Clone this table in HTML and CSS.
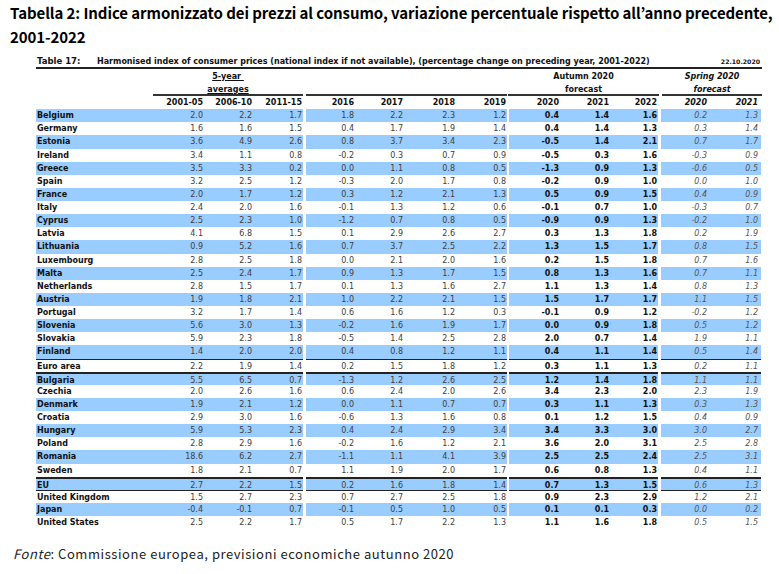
FILE: index.html
```html
<!DOCTYPE html>
<html lang="it">
<head>
<meta charset="utf-8">
<title>Tabella 2</title>
<link rel="stylesheet" href="styles.css">
</head>
<body>
<h1 class="title">Tabella 2: Indice armonizzato dei prezzi al consumo, variazione percentuale rispetto all’anno precedente, 2001-2022</h1>
<div class="tbl">
  <div class="tt"><span class="tt-no">Table 17:</span><span class="tt-name">Harmonised index of consumer prices (national index if not available), (percentage change on preceding year, 2001-2022)</span><span class="tt-date">22.10.2020</span></div>
  <div class="hb">
    <div class="hb-lab"></div>
    <div class="hg hg1"><span class="u">5-year&nbsp;</span><span class="u">averages</span></div>
    <div class="hg hg2"></div>
    <div class="hg hg3"><span>Autumn 2020</span><span>forecast</span></div>
    <div class="hg hg4 it"><span>Spring 2020</span><span>forecast</span></div>
  </div>
  <div class="row hc">
    <div class="g g1"><span class="lab"></span><span>2001-05</span><span>2006-10</span><span>2011-15</span></div>
    <div class="g g2"><span>2016</span><span>2017</span><span>2018</span><span>2019</span></div>
    <div class="g g3"><span>2020</span><span>2021</span><span>2022</span></div>
    <div class="g g4"><span>2020</span><span>2021</span></div>
  </div>
  <div class="row b"><div class="g g1"><span class="lab">Belgium</span><span>2.0</span><span>2.2</span><span>1.7</span></div><div class="g g2"><span>1.8</span><span>2.2</span><span>2.3</span><span>1.2</span></div><div class="g g3"><span>0.4</span><span>1.4</span><span>1.6</span></div><div class="g g4"><span>0.2</span><span>1.3</span></div></div>
  <div class="row"><div class="g g1"><span class="lab">Germany</span><span>1.6</span><span>1.6</span><span>1.5</span></div><div class="g g2"><span>0.4</span><span>1.7</span><span>1.9</span><span>1.4</span></div><div class="g g3"><span>0.4</span><span>1.4</span><span>1.3</span></div><div class="g g4"><span>0.3</span><span>1.4</span></div></div>
  <div class="row b"><div class="g g1"><span class="lab">Estonia</span><span>3.6</span><span>4.9</span><span>2.6</span></div><div class="g g2"><span>0.8</span><span>3.7</span><span>3.4</span><span>2.3</span></div><div class="g g3"><span>-0.5</span><span>1.4</span><span>2.1</span></div><div class="g g4"><span>0.7</span><span>1.7</span></div></div>
  <div class="row"><div class="g g1"><span class="lab">Ireland</span><span>3.4</span><span>1.1</span><span>0.8</span></div><div class="g g2"><span>-0.2</span><span>0.3</span><span>0.7</span><span>0.9</span></div><div class="g g3"><span>-0.5</span><span>0.3</span><span>1.6</span></div><div class="g g4"><span>-0.3</span><span>0.9</span></div></div>
  <div class="row b"><div class="g g1"><span class="lab">Greece</span><span>3.5</span><span>3.3</span><span>0.2</span></div><div class="g g2"><span>0.0</span><span>1.1</span><span>0.8</span><span>0.5</span></div><div class="g g3"><span>-1.3</span><span>0.9</span><span>1.3</span></div><div class="g g4"><span>-0.6</span><span>0.5</span></div></div>
  <div class="row"><div class="g g1"><span class="lab">Spain</span><span>3.2</span><span>2.5</span><span>1.2</span></div><div class="g g2"><span>-0.3</span><span>2.0</span><span>1.7</span><span>0.8</span></div><div class="g g3"><span>-0.2</span><span>0.9</span><span>1.0</span></div><div class="g g4"><span>0.0</span><span>1.0</span></div></div>
  <div class="row b"><div class="g g1"><span class="lab">France</span><span>2.0</span><span>1.7</span><span>1.2</span></div><div class="g g2"><span>0.3</span><span>1.2</span><span>2.1</span><span>1.3</span></div><div class="g g3"><span>0.5</span><span>0.9</span><span>1.5</span></div><div class="g g4"><span>0.4</span><span>0.9</span></div></div>
  <div class="row"><div class="g g1"><span class="lab">Italy</span><span>2.4</span><span>2.0</span><span>1.6</span></div><div class="g g2"><span>-0.1</span><span>1.3</span><span>1.2</span><span>0.6</span></div><div class="g g3"><span>-0.1</span><span>0.7</span><span>1.0</span></div><div class="g g4"><span>-0.3</span><span>0.7</span></div></div>
  <div class="row b"><div class="g g1"><span class="lab">Cyprus</span><span>2.5</span><span>2.3</span><span>1.0</span></div><div class="g g2"><span>-1.2</span><span>0.7</span><span>0.8</span><span>0.5</span></div><div class="g g3"><span>-0.9</span><span>0.9</span><span>1.3</span></div><div class="g g4"><span>-0.2</span><span>1.0</span></div></div>
  <div class="row"><div class="g g1"><span class="lab">Latvia</span><span>4.1</span><span>6.8</span><span>1.5</span></div><div class="g g2"><span>0.1</span><span>2.9</span><span>2.6</span><span>2.7</span></div><div class="g g3"><span>0.3</span><span>1.3</span><span>1.8</span></div><div class="g g4"><span>0.2</span><span>1.9</span></div></div>
  <div class="row b"><div class="g g1"><span class="lab">Lithuania</span><span>0.9</span><span>5.2</span><span>1.6</span></div><div class="g g2"><span>0.7</span><span>3.7</span><span>2.5</span><span>2.2</span></div><div class="g g3"><span>1.3</span><span>1.5</span><span>1.7</span></div><div class="g g4"><span>0.8</span><span>1.5</span></div></div>
  <div class="row"><div class="g g1"><span class="lab">Luxembourg</span><span>2.8</span><span>2.5</span><span>1.8</span></div><div class="g g2"><span>0.0</span><span>2.1</span><span>2.0</span><span>1.6</span></div><div class="g g3"><span>0.2</span><span>1.5</span><span>1.8</span></div><div class="g g4"><span>0.7</span><span>1.6</span></div></div>
  <div class="row b"><div class="g g1"><span class="lab">Malta</span><span>2.5</span><span>2.4</span><span>1.7</span></div><div class="g g2"><span>0.9</span><span>1.3</span><span>1.7</span><span>1.5</span></div><div class="g g3"><span>0.8</span><span>1.3</span><span>1.6</span></div><div class="g g4"><span>0.7</span><span>1.1</span></div></div>
  <div class="row"><div class="g g1"><span class="lab">Netherlands</span><span>2.8</span><span>1.5</span><span>1.7</span></div><div class="g g2"><span>0.1</span><span>1.3</span><span>1.6</span><span>2.7</span></div><div class="g g3"><span>1.1</span><span>1.3</span><span>1.4</span></div><div class="g g4"><span>0.8</span><span>1.3</span></div></div>
  <div class="row b"><div class="g g1"><span class="lab">Austria</span><span>1.9</span><span>1.8</span><span>2.1</span></div><div class="g g2"><span>1.0</span><span>2.2</span><span>2.1</span><span>1.5</span></div><div class="g g3"><span>1.5</span><span>1.7</span><span>1.7</span></div><div class="g g4"><span>1.1</span><span>1.5</span></div></div>
  <div class="row"><div class="g g1"><span class="lab">Portugal</span><span>3.2</span><span>1.7</span><span>1.4</span></div><div class="g g2"><span>0.6</span><span>1.6</span><span>1.2</span><span>0.3</span></div><div class="g g3"><span>-0.1</span><span>0.9</span><span>1.2</span></div><div class="g g4"><span>-0.2</span><span>1.2</span></div></div>
  <div class="row b"><div class="g g1"><span class="lab">Slovenia</span><span>5.6</span><span>3.0</span><span>1.3</span></div><div class="g g2"><span>-0.2</span><span>1.6</span><span>1.9</span><span>1.7</span></div><div class="g g3"><span>0.0</span><span>0.9</span><span>1.8</span></div><div class="g g4"><span>0.5</span><span>1.2</span></div></div>
  <div class="row"><div class="g g1"><span class="lab">Slovakia</span><span>5.9</span><span>2.3</span><span>1.8</span></div><div class="g g2"><span>-0.5</span><span>1.4</span><span>2.5</span><span>2.8</span></div><div class="g g3"><span>2.0</span><span>0.7</span><span>1.4</span></div><div class="g g4"><span>1.9</span><span>1.1</span></div></div>
  <div class="row b"><div class="g g1"><span class="lab">Finland</span><span>1.4</span><span>2.0</span><span>2.0</span></div><div class="g g2"><span>0.4</span><span>0.8</span><span>1.2</span><span>1.1</span></div><div class="g g3"><span>0.4</span><span>1.1</span><span>1.4</span></div><div class="g g4"><span>0.5</span><span>1.4</span></div></div>
  <div class="row line"><div class="g g1"><span class="lab">Euro area</span><span>2.2</span><span>1.9</span><span>1.4</span></div><div class="g g2"><span>0.2</span><span>1.5</span><span>1.8</span><span>1.2</span></div><div class="g g3"><span>0.3</span><span>1.1</span><span>1.3</span></div><div class="g g4"><span>0.2</span><span>1.1</span></div></div>
  <div class="row b thick"><div class="g g1"><span class="lab">Bulgaria</span><span>5.5</span><span>6.5</span><span>0.7</span></div><div class="g g2"><span>-1.3</span><span>1.2</span><span>2.6</span><span>2.5</span></div><div class="g g3"><span>1.2</span><span>1.4</span><span>1.8</span></div><div class="g g4"><span>1.1</span><span>1.1</span></div></div>
  <div class="row"><div class="g g1"><span class="lab">Czechia</span><span>2.0</span><span>2.6</span><span>1.6</span></div><div class="g g2"><span>0.6</span><span>2.4</span><span>2.0</span><span>2.6</span></div><div class="g g3"><span>3.4</span><span>2.3</span><span>2.0</span></div><div class="g g4"><span>2.3</span><span>1.9</span></div></div>
  <div class="row b"><div class="g g1"><span class="lab">Denmark</span><span>1.9</span><span>2.1</span><span>1.2</span></div><div class="g g2"><span>0.0</span><span>1.1</span><span>0.7</span><span>0.7</span></div><div class="g g3"><span>0.3</span><span>1.1</span><span>1.3</span></div><div class="g g4"><span>0.3</span><span>1.3</span></div></div>
  <div class="row"><div class="g g1"><span class="lab">Croatia</span><span>2.9</span><span>3.0</span><span>1.6</span></div><div class="g g2"><span>-0.6</span><span>1.3</span><span>1.6</span><span>0.8</span></div><div class="g g3"><span>0.1</span><span>1.2</span><span>1.5</span></div><div class="g g4"><span>0.4</span><span>0.9</span></div></div>
  <div class="row b"><div class="g g1"><span class="lab">Hungary</span><span>5.9</span><span>5.3</span><span>2.3</span></div><div class="g g2"><span>0.4</span><span>2.4</span><span>2.9</span><span>3.4</span></div><div class="g g3"><span>3.4</span><span>3.3</span><span>3.0</span></div><div class="g g4"><span>3.0</span><span>2.7</span></div></div>
  <div class="row"><div class="g g1"><span class="lab">Poland</span><span>2.8</span><span>2.9</span><span>1.6</span></div><div class="g g2"><span>-0.2</span><span>1.6</span><span>1.2</span><span>2.1</span></div><div class="g g3"><span>3.6</span><span>2.0</span><span>3.1</span></div><div class="g g4"><span>2.5</span><span>2.8</span></div></div>
  <div class="row b"><div class="g g1"><span class="lab">Romania</span><span>18.6</span><span>6.2</span><span>2.7</span></div><div class="g g2"><span>-1.1</span><span>1.1</span><span>4.1</span><span>3.9</span></div><div class="g g3"><span>2.5</span><span>2.5</span><span>2.4</span></div><div class="g g4"><span>2.5</span><span>3.1</span></div></div>
  <div class="row"><div class="g g1"><span class="lab">Sweden</span><span>1.8</span><span>2.1</span><span>0.7</span></div><div class="g g2"><span>1.1</span><span>1.9</span><span>2.0</span><span>1.7</span></div><div class="g g3"><span>0.6</span><span>0.8</span><span>1.3</span></div><div class="g g4"><span>0.4</span><span>1.1</span></div></div>
  <div class="row b thick"><div class="g g1"><span class="lab">EU</span><span>2.7</span><span>2.2</span><span>1.5</span></div><div class="g g2"><span>0.2</span><span>1.6</span><span>1.8</span><span>1.4</span></div><div class="g g3"><span>0.7</span><span>1.3</span><span>1.5</span></div><div class="g g4"><span>0.6</span><span>1.3</span></div></div>
  <div class="row line"><div class="g g1"><span class="lab">United Kingdom</span><span>1.5</span><span>2.7</span><span>2.3</span></div><div class="g g2"><span>0.7</span><span>2.7</span><span>2.5</span><span>1.8</span></div><div class="g g3"><span>0.9</span><span>2.3</span><span>2.9</span></div><div class="g g4"><span>1.2</span><span>2.1</span></div></div>
  <div class="row b"><div class="g g1"><span class="lab">Japan</span><span>-0.4</span><span>-0.1</span><span>0.7</span></div><div class="g g2"><span>-0.1</span><span>0.5</span><span>1.0</span><span>0.5</span></div><div class="g g3"><span>0.1</span><span>0.1</span><span>0.3</span></div><div class="g g4"><span>0.0</span><span>0.2</span></div></div>
  <div class="row"><div class="g g1"><span class="lab">United States</span><span>2.5</span><span>2.2</span><span>1.7</span></div><div class="g g2"><span>0.5</span><span>1.7</span><span>2.2</span><span>1.3</span></div><div class="g g3"><span>1.1</span><span>1.6</span><span>1.8</span></div><div class="g g4"><span>0.5</span><span>1.5</span></div></div>
</div>
<p class="src"><em>Fonte</em>: Commissione europea, previsioni economiche autunno 2020</p>
</body>
</html>
```

FILE: styles.css
```css
html, body {
  margin: 0;
  padding: 0;
  background: #fff;
}

.title {
  margin: 0;
  padding: 1px 0 0 10px;
  font-family: "Noto Sans CJK JP", "Noto Sans", sans-serif;
  font-weight: 700;
  font-size: 15px;
  letter-spacing: -0.08px;
  line-height: 24px;
  color: #000;
}

.tbl {
  margin: 6px 0 0 36px;
  width: 726px;
  font-family: "DejaVu Sans", "Lato", sans-serif;
  font-size: 8px;
  color: #404040;
}

.tt {
  display: flex;
  align-items: center;
  height: 12px;
  border-bottom: 2px solid #222;
  font-weight: 700;
  color: #111;
  font-size: 8px;
  white-space: nowrap;
}

.tt-no {
  width: 60px;
  padding-left: 1px;
  font-size: 8.5px;
}

.tt-name {
  flex: 1;
}

.tt-date {
  padding-right: 2px;
  font-size: 6.2px;
}

.hb {
  display: flex;
  height: 27px;
  font-weight: 700;
  color: #111;
}

.hb-lab {
  width: 117px;
}

.hg {
  display: flex;
  flex-direction: column;
  align-items: center;
  box-sizing: border-box;
  border-bottom: 2px solid #333;
  line-height: 13px;
  padding-top: 1px;
}

.hg1 { width: 150px; }
.hg2 { width: 201px; margin-left: 3px; }
.hg3 { width: 151px; margin-left: 1px; }
.hg4 { width: 100px; margin-left: 3px; }

.hg1 .u {
  text-decoration: underline;
  text-underline-offset: 1px;
}

.it {
  font-style: italic;
}

.row {
  display: flex;
  height: 13.125px;
  line-height: 13px;
}

.g {
  display: grid;
  box-sizing: border-box;
  white-space: nowrap;
}

.g > span {
  text-align: right;
  padding-right: 1px;
}

.g1 { width: 267px; grid-template-columns: 117px 51px 49px 50px; }
.g2 { width: 201px; margin-left: 3px; grid-template-columns: 49px 49px 52px 51px; }
.g3 { width: 149px; margin-left: 2px; grid-template-columns: 51px 50px 48px; }
.g4 { width: 100px; margin-left: 3px; grid-template-columns: 47px 53px; }

.g4 > span:last-child {
  padding-right: 3px;
}

.g > .lab {
  text-align: left;
  padding-left: 1px;
  font-weight: 700;
  color: #111;
}

.g3 > span {
  font-weight: 700;
  color: #111;
}

.g4 > span {
  font-style: italic;
  color: #555;
}

.hc .g > span {
  font-weight: 700;
  color: #111;
}

.hc .g4 > span {
  font-style: italic;
}

.row.b .g {
  background: #99ccff;
}

.row.line .g {
  border-top: 1px solid #222;
}

.row.thick .g {
  border-top: 2px solid #222;
}

.src {
  margin: 17px 0 0 13px;
  font-family: "Noto Sans CJK JP", "Noto Sans", sans-serif;
  font-size: 13px;
  line-height: 16px;
  color: #222;
  letter-spacing: 0.55px;
}
```
